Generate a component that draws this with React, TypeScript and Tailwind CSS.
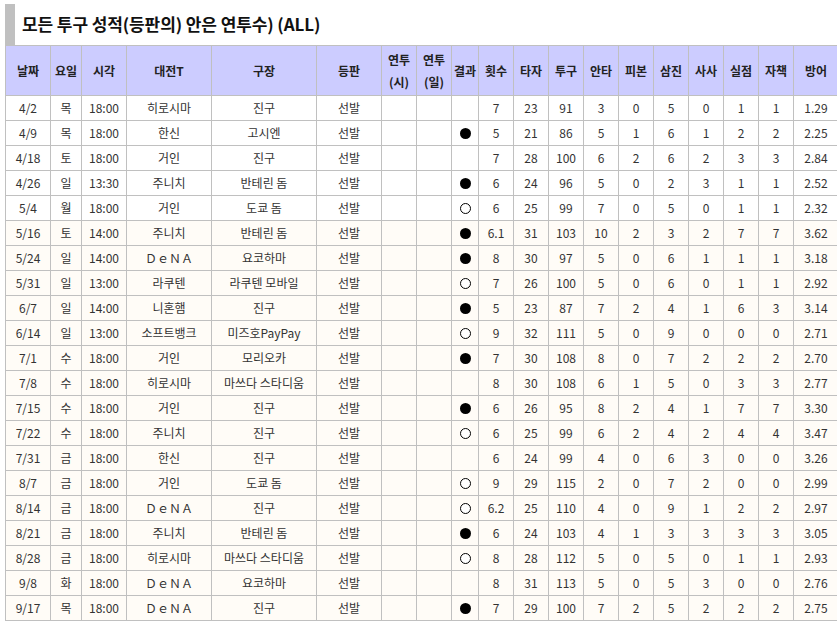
import React from "react";

type Row = [string, string, string, string, string, string, string, string, string, string, string, string, string, string, string, string, string, string];

const rows: Row[] = [
  ["4/2", "목", "18:00", "히로시마", "진구", "선발", "", "", "", "7", "23", "91", "3", "0", "5", "0", "1", "1"],
  ["4/9", "목", "18:00", "한신", "고시엔", "선발", "", "", "b", "5", "21", "86", "5", "1", "6", "1", "2", "2"],
  ["4/18", "토", "18:00", "거인", "진구", "선발", "", "", "", "7", "28", "100", "6", "2", "6", "2", "3", "3"],
  ["4/26", "일", "13:30", "주니치", "반테린 돔", "선발", "", "", "b", "6", "24", "96", "5", "0", "2", "3", "1", "1"],
  ["5/4", "월", "18:00", "거인", "도쿄 돔", "선발", "", "", "w", "6", "25", "99", "7", "0", "5", "0", "1", "1"],
  ["5/16", "토", "14:00", "주니치", "반테린 돔", "선발", "", "", "b", "6.1", "31", "103", "10", "2", "3", "2", "7", "7"],
  ["5/24", "일", "14:00", "ＤｅＮＡ", "요코하마", "선발", "", "", "b", "8", "30", "97", "5", "0", "6", "1", "1", "1"],
  ["5/31", "일", "13:00", "라쿠텐", "라쿠텐 모바일", "선발", "", "", "w", "7", "26", "100", "5", "0", "6", "0", "1", "1"],
  ["6/7", "일", "14:00", "니혼햄", "진구", "선발", "", "", "b", "5", "23", "87", "7", "2", "4", "1", "6", "3"],
  ["6/14", "일", "13:00", "소프트뱅크", "미즈호PayPay", "선발", "", "", "w", "9", "32", "111", "5", "0", "9", "0", "0", "0"],
  ["7/1", "수", "18:00", "거인", "모리오카", "선발", "", "", "b", "7", "30", "108", "8", "0", "7", "2", "2", "2"],
  ["7/8", "수", "18:00", "히로시마", "마쓰다 스타디움", "선발", "", "", "", "8", "30", "108", "6", "1", "5", "0", "3", "3"],
  ["7/15", "수", "18:00", "거인", "진구", "선발", "", "", "b", "6", "26", "95", "8", "2", "4", "1", "7", "7"],
  ["7/22", "수", "18:00", "주니치", "진구", "선발", "", "", "w", "6", "25", "99", "6", "2", "4", "2", "4", "4"],
  ["7/31", "금", "18:00", "한신", "진구", "선발", "", "", "", "6", "24", "99", "4", "0", "6", "3", "0", "0"],
  ["8/7", "금", "18:00", "거인", "도쿄 돔", "선발", "", "", "w", "9", "29", "115", "2", "0", "7", "2", "0", "0"],
  ["8/14", "금", "18:00", "ＤｅＮＡ", "진구", "선발", "", "", "w", "6.2", "25", "110", "4", "0", "9", "1", "2", "2"],
  ["8/21", "금", "18:00", "주니치", "반테린 돔", "선발", "", "", "b", "6", "24", "103", "4", "1", "3", "3", "3", "3"],
  ["8/28", "금", "18:00", "히로시마", "마쓰다 스타디움", "선발", "", "", "w", "8", "28", "112", "5", "0", "5", "0", "1", "1"],
  ["9/8", "화", "18:00", "ＤｅＮＡ", "요코하마", "선발", "", "", "", "8", "31", "113", "5", "0", "5", "3", "0", "0"],
  ["9/17", "목", "18:00", "ＤｅＮＡ", "진구", "선발", "", "", "b", "7", "29", "100", "7", "2", "5", "2", "2", "2"],
];

const era = ["1.29", "2.25", "2.84", "2.52", "2.32", "3.62", "3.18", "2.92", "3.14", "2.71", "2.70", "2.77", "3.30", "3.47", "3.26", "2.99", "2.97", "3.05", "2.93", "2.76", "2.75"];

const widths = [45, 31, 45, 85, 105, 65, 35, 35, 27, 35, 35, 35, 35, 35, 35, 35, 35, 35, 45];

const headers: React.ReactNode[] = [
  "날짜", "요일", "시각", "대전T", "구장", "등판",
  <span key="a" className="leading-[22px]">연투<br />(시)</span>,
  <span key="b" className="leading-[22px]">연투<br />(일)</span>,
  "결과", "횟수", "타자", "투구", "안타", "피본", "삼진", "사사", "실점", "자책", "방어",
];

function Mark({ t }: { t: string }) {
  let dot: React.ReactNode = null;
  if (t === "b") dot = <span className="block w-[11px] h-[11px] rounded-full bg-black" />;
  if (t === "w") dot = <span className="block w-[11px] h-[11px] rounded-full border border-black bg-white" />;
  return <div className="flex h-[24px] items-center justify-center">{dot}</div>;
}

export default function App() {
  const total = widths.reduce((a, b) => a + b, 0);
  return (
    <div className="w-[837px] h-[627px] overflow-hidden bg-white text-[#333]" style={{ fontFamily: '"Noto Sans CJK KR", "Noto Sans", sans-serif' }}>
      <div className="pt-[4px] pl-[5px] flex">
        <div className="w-[10px] h-[41px] bg-[#c0c0c0]" />
        <div className="pl-[7px] h-[41px] pb-[2px] flex items-center text-[17px] font-bold text-[#111] tracking-[-0.1px]">
          모든 투구 성적(등판의) 안은 연투수) (ALL)
        </div>
      </div>
      <table className="ml-[5px] border-collapse table-fixed text-[12px]" style={{ width: total }}>
        <colgroup>
          {widths.map((w, i) => (
            <col key={i} style={{ width: w }} />
          ))}
        </colgroup>
        <thead>
          <tr className="h-[50px] bg-[#ccccff]">
            {headers.map((h, i) => (
              <th key={i} className="border border-[#c0c0c0] p-0 text-center font-bold text-[#222] text-[12px] whitespace-nowrap">
                {h}
              </th>
            ))}
          </tr>
        </thead>
        <tbody>
          {rows.map((r, ri) => (
            <tr key={ri} className={`h-[25px] ${ri < 5 ? "bg-white" : "bg-[#fffcf7]"}`}>
              {r.map((c, ci) => (
                <td key={ci} className="border border-[#c0c0c0] p-0 text-center whitespace-nowrap leading-[24px]">
                  {ci === 8 ? <Mark t={c} /> : c}
                </td>
              ))}
              <td className="border border-[#c0c0c0] p-0 text-center whitespace-nowrap leading-[24px]">{era[ri]}</td>
            </tr>
          ))}
        </tbody>
      </table>
    </div>
  );
}
